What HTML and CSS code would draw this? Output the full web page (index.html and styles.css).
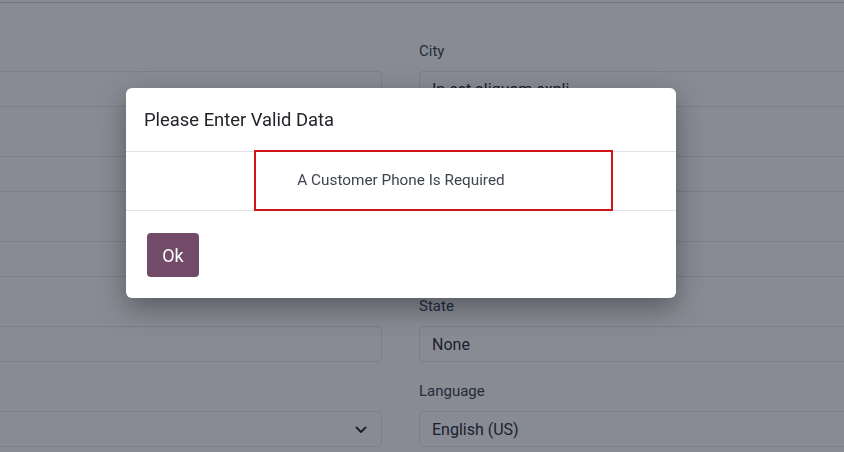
FILE: index.html
```html
<!DOCTYPE html>
<html>
<head>
<meta charset="utf-8">
<link rel="stylesheet" href="styles.css">
</head>
<body>
<div class="page">
  <div class="topbar"></div>
  <div class="form">
    <div class="col col-left">
      <div class="field"><div class="label"></div><div class="input"></div></div>
      <div class="field"><div class="label"></div><div class="input"></div></div>
      <div class="field"><div class="label"></div><div class="input"></div></div>
      <div class="field"><div class="label"></div><div class="input"></div></div>
      <div class="field"><div class="label"></div><div class="input select"><svg class="chev" width="12" height="8" viewBox="0 0 12 8"><path d="M1.5 1.5 L6 6 L10.5 1.5" fill="none" stroke="#1f2430" stroke-width="1.8" stroke-linecap="round" stroke-linejoin="round"/></svg></div></div>
    </div>
    <div class="col col-right">
      <div class="field"><div class="label">City</div><div class="input">In est aliquam expli</div></div>
      <div class="field"><div class="label">Zip</div><div class="input"></div></div>
      <div class="field"><div class="label">Mobile</div><div class="input"></div></div>
      <div class="field"><div class="label">State</div><div class="input">None</div></div>
      <div class="field"><div class="label">Language</div><div class="input">English (US)</div></div>
    </div>
  </div>
</div>
<div class="overlay">
  <div class="modal">
    <div class="modal-header">Please Enter Valid Data</div>
    <div class="modal-body">
      <span class="msg">A Customer Phone Is Required</span>
      <div class="highlight"></div>
    </div>
    <div class="modal-footer"><button class="btn">Ok</button></div>
  </div>
</div>
</body>
</html>
```
FILE: styles.css
```css
html, body {
  margin: 0;
  padding: 0;
  width: 844px;
  height: 452px;
  overflow: hidden;
  background: #ffffff;
  font-family: Roboto, "Noto Sans", "Liberation Sans", sans-serif;
}
.page {
  width: 844px;
  height: 452px;
  overflow: hidden;
}
.topbar {
  height: 2px;
  border-bottom: 1px solid #cfd3d9;
}
.form {
  display: grid;
  grid-template-columns: 500px 520px;
  column-gap: 37px;
  margin-left: -118px;
  padding-top: 37px;
}
.col {
  display: flex;
  flex-direction: column;
  gap: 18px;
}
.field {
  display: flex;
  flex-direction: column;
}
.label {
  font-size: 15px;
  line-height: 22px;
  height: 22px;
  margin-bottom: 9px;
  color: #374151;
}
.input {
  box-sizing: border-box;
  height: 36px;
  border: 1px solid #e5e7eb;
  border-radius: 4px;
  padding: 0 12px;
  font-size: 16px;
  line-height: 34px;
  color: #1f2937;
  display: flex;
  align-items: center;
  padding-top: 1px;
}
.select {
  justify-content: flex-end;
  padding-right: 14px;
}
.chev { display: block; }
.overlay {
  position: fixed;
  inset: 0;
  background: rgba(17, 24, 39, 0.5);
  padding: 88px 0 0 126px;
}
.modal {
  width: 550px;
  background: #ffffff;
  border-radius: 6px;
  box-shadow: 0 10px 28px rgba(0, 0, 0, 0.35);
}
.modal-header {
  height: 64px;
  box-sizing: border-box;
  padding: 0 18px 1px;
  display: flex;
  align-items: center;
  font-size: 18.4px;
  color: #212529;
  border-bottom: 1px solid #dee2e6;
}
.modal-body {
  position: relative;
  height: 59px;
  box-sizing: border-box;
  display: flex;
  align-items: center;
  justify-content: center;
  padding-bottom: 2px;
  font-size: 15.3px;
  color: #3f4450;
  border-bottom: 1px solid #dee2e6;
}
.highlight {
  position: absolute;
  left: 128px;
  top: -2px;
  width: 359px;
  height: 61px;
  box-sizing: border-box;
  border: 2px solid #cf1418;
}
.modal-footer {
  height: 87px;
  box-sizing: border-box;
  padding: 22px 21px;
}
.btn {
  width: 52px;
  height: 44px;
  border: none;
  border-radius: 4px;
  background: #714b67;
  color: #ffffff;
  font-family: Roboto, "Noto Sans", sans-serif;
  font-size: 18px;
  padding: 0;
}
```
